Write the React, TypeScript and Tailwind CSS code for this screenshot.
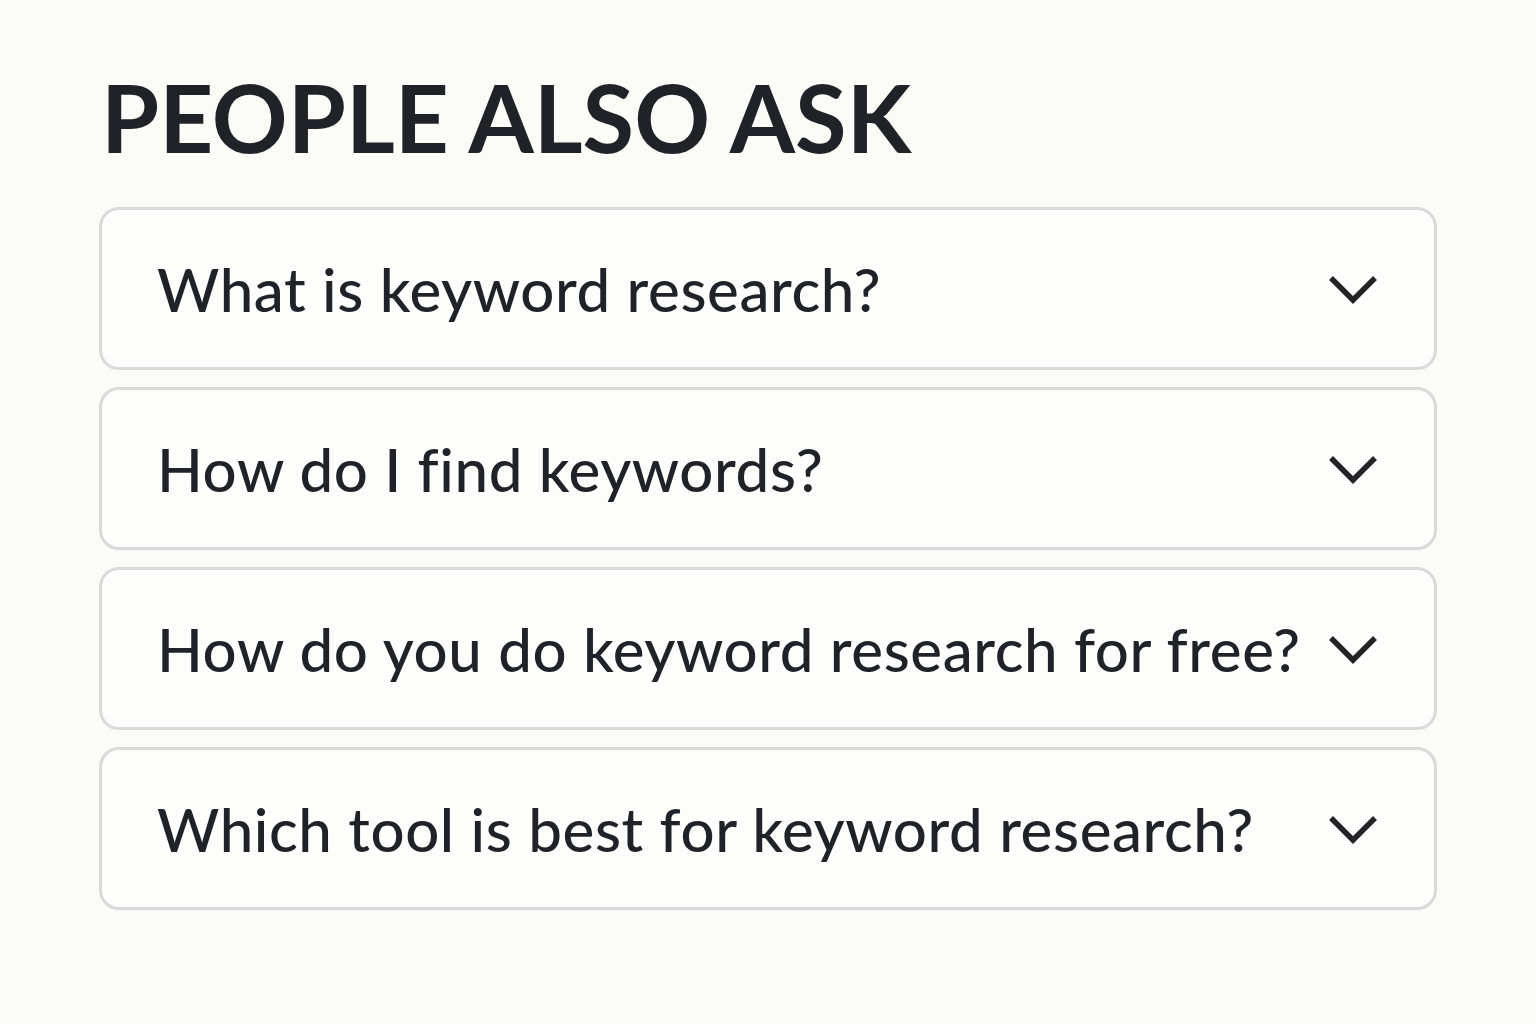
const questions = [
  "What is keyword research?",
  "How do I find keywords?",
  "How do you do keyword research for free?",
  "Which tool is best for keyword research?",
];

function Chevron() {
  return (
    <svg width="50" height="32" viewBox="0 0 50 32" fill="none" className="shrink-0">
      <polyline points="3,5 25,27 47,5" stroke="#222428" strokeWidth="5.5" strokeLinejoin="miter" />
    </svg>
  );
}

export default function App() {
  return (
    <div className="min-h-screen w-full bg-[#fbfbf8] text-[#1f2227] font-['Lato','Inter',sans-serif]">
      <section className="pl-[99px] pr-[99px] pt-[70px]">
        <h1 className="pl-[2px] text-[94px] font-bold leading-none">PEOPLE ALSO ASK</h1>

        <div className="mt-[43px] flex flex-col gap-[17px]">
          {questions.map((q) => (
            <div
              key={q}
              className="flex h-[163px] items-center justify-between gap-4 rounded-[20px] border-[3px] border-[#dadada] bg-[#fdfdfb] pl-[55px] pr-[56px]"
            >
              <span className="whitespace-nowrap text-[60px] font-medium leading-none tracking-[0.01em]">{q}</span>
              <Chevron />
            </div>
          ))}
        </div>
      </section>
    </div>
  );
}
